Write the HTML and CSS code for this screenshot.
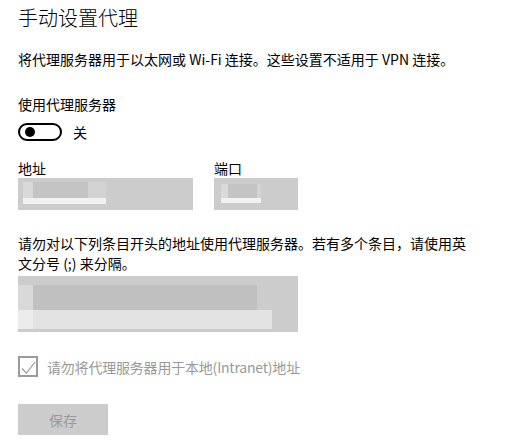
FILE: index.html
```html
<!DOCTYPE html>
<html lang="zh-CN">
<head>
<meta charset="utf-8">
<title>手动设置代理</title>
<link rel="stylesheet" href="styles.css">
</head>
<body>
<main class="page">
  <h1 class="title">手动设置代理</h1>
  <p class="intro">将代理服务器用于以太网或 Wi-Fi 连接。这些设置不适用于 VPN 连接。</p>

  <div class="label use-label">使用代理服务器</div>
  <div class="toggle-row">
    <span class="toggle"><span class="knob"></span></span>
    <span class="toggle-text">关</span>
  </div>

  <div class="fields">
    <div class="field">
      <div class="label">地址</div>
      <div class="input addr">
        <div class="blob-row">
          <span class="b b-light w10"></span><span class="b b-dark w55"></span><span class="b b-mid w18"></span>
        </div>
        <div class="strip w83"></div>
      </div>
    </div>
    <div class="field">
      <div class="label">端口</div>
      <div class="input port">
        <div class="blob-row short">
          <span class="b b-light w7"></span><span class="b b-dark w29"></span><span class="b b-mid w4"></span>
        </div>
        <div class="strip w40 thin"></div>
      </div>
    </div>
  </div>

  <p class="exceptions">请勿对以下列条目开头的地址使用代理服务器。若有多个条目，请使用英文分号 (;) 来分隔。</p>
  <div class="textarea">
    <div class="blob-row tall">
      <span class="b b-light w15"></span><span class="b b-darker w224"></span>
    </div>
    <div class="strip-row">
      <span class="s s-light w15"></span><span class="s s-mid w239"></span>
    </div>
  </div>

  <label class="check-row">
    <span class="checkbox">
      <svg width="16" height="17" viewBox="0 0 16 17"><path d="M2 10.5 L6.5 15 L15 4" fill="none" stroke="#9a9a9a" stroke-width="1.2"/></svg>
    </span>
    <span class="check-text">请勿将代理服务器用于本地(Intranet)地址</span>
  </label>

  <button class="save" type="button">保存</button>
</main>
</body>
</html>
```

FILE: styles.css
```css
* { box-sizing: border-box; }
html, body { margin: 0; padding: 0; background: #ffffff; }
body {
  font-family: "Noto Sans CJK SC", "Noto Sans", sans-serif;
  color: #000;
  font-size: 14px;
}
.page {
  padding: 4px 0 0 18px;
  display: flex;
  flex-direction: column;
  align-items: flex-start;
}
.title {
  margin: 0;
  font-size: 20px;
  font-weight: 300;
  line-height: 28px;
}
.intro {
  margin: 17px 0 0;
  line-height: 20px;
}
.label { line-height: 20px; }
.use-label { margin-top: 25px; }
.toggle-row {
  margin-top: 8px;
  height: 20px;
  display: flex;
  align-items: center;
  gap: 11px;
}
.toggle {
  width: 44px;
  height: 18px;
  border: 2px solid #000;
  border-radius: 9px;
  display: flex;
  align-items: center;
  padding-left: 5px;
}
.knob {
  width: 10px;
  height: 10px;
  border-radius: 50%;
  background: #000;
}
.toggle-text { line-height: 20px; }
.fields {
  margin-top: 16px;
  display: flex;
  gap: 21px;
}
.input {
  background: #cccccc;
  height: 32px;
}
.addr { width: 175px; padding: 4px 0 0 5px; }
.port { width: 84px; padding: 6px 0 0 7px; }
.blob-row { display: flex; height: 16px; }
.blob-row.short { height: 14px; }
.blob-row.tall { height: 25px; }
.b { display: block; height: 100%; }
.b-light { background: #d9d9d9; }
.b-dark { background: #c4c4c4; }
.b-darker { background: #c0c0c0; }
.b-mid { background: #d3d3d3; }
.strip { height: 6px; background: #f1f1f1; }
.strip.thin { height: 5px; }
.w4 { width: 4px; } .w7 { width: 7px; } .w10 { width: 10px; } .w15 { width: 15px; }
.w18 { width: 18px; } .w29 { width: 29px; } .w40 { width: 40px; } .w55 { width: 55px; }
.w83 { width: 83px; } .w224 { width: 224px; } .w239 { width: 239px; }
.exceptions {
  margin: 23px 0 0;
  width: 456px;
  line-height: 20px;
}
.textarea {
  margin-top: 3px;
  width: 280px;
  height: 56px;
  background: #cccccc;
  padding-top: 9px;
}
.strip-row { display: flex; height: 19px; }
.s { display: block; height: 100%; }
.s-light { background: #ececec; }
.s-mid { background: #e3e3e3; }
.check-row {
  margin-top: 24px;
  display: flex;
  align-items: center;
  gap: 9px;
  height: 21px;
}
.checkbox {
  width: 20px;
  height: 21px;
  border: 2px solid #9a9a9a;
  display: flex;
  align-items: flex-start;
}
.checkbox svg { display: block; }
.check-text { color: #999; line-height: 20px; letter-spacing: -0.2px; }
.save {
  margin-top: 27px;
  width: 90px;
  height: 31px;
  background: #cccccc;
  border: none;
  color: #999;
  font-family: inherit;
  font-size: 14px;
  padding: 0;
}
```
